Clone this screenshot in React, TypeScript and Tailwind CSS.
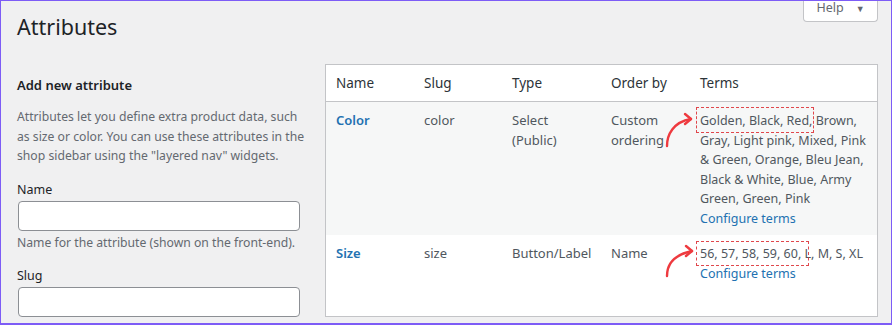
import React from "react"

const terms1 = [
  "Golden, Black, Red, Brown,",
  "Gray, Light pink, Mixed, Pink",
  "& Green, Orange, Bleu Jean,",
  "Black & White, Blue, Army",
  "Green, Green, Pink",
]

const Arrow = ({ d, head }: { d: string; head: string }) => (
  <g fill="none" stroke="#ee3a3f" strokeWidth="2.4" strokeLinecap="round" strokeLinejoin="round">
    <path d={d} />
    <path d={head} />
  </g>
)

export default function App() {
  return (
    <div className="relative h-[325px] w-[892px] overflow-hidden border border-b-2 border-[#7d5cf6] bg-[#f0f0f1] font-['Noto_Sans',sans-serif] text-[13px] text-[#3c434a]">
      <div className="absolute right-[13px] top-0 flex h-[21px] w-[75px] items-start justify-center gap-3 rounded-b-[4px] border border-t-0 border-[#c3c4c7] bg-white text-[12.5px] text-[#646970]">
        <span className="-mt-[2px] leading-[18px]">Help</span>
        <span className="-mt-[1px] text-[9px] leading-[18px]">▼</span>
      </div>

      <h1 className="pl-[16px] pt-[11px] text-[21.5px] leading-[30px] text-[#1d2327]">Attributes</h1>

      <div className="mt-[22px] flex">
        <div className="ml-[16px] w-[284px] pt-[11px]">
          <h2 className="text-[13px] font-semibold leading-[20px] text-[#1d2327]">Add new attribute</h2>
          <p className="mt-[12px] whitespace-nowrap text-[12.2px] leading-[19.5px] text-[#646970]">
            Attributes let you define extra product data, such
            <br />
            as size or color. You can use these attributes in the
            <br />
            shop sidebar using the "layered nav" widgets.
          </p>
          <label className="mt-[14px] block text-[12.5px] leading-[20px] text-[#1d2327]">Name</label>
          <div className="mt-[1px] ml-[1px] h-[30px] w-[282px] rounded-[4px] border border-[#8c8f94] bg-white" />
          <p className="mt-[2px] whitespace-nowrap text-[12.2px] leading-[19.5px] text-[#646970]">
            Name for the attribute (shown on the front-end).
          </p>
          <label className="mt-[14px] block text-[12.5px] leading-[20px] text-[#1d2327]">Slug</label>
          <div className="mt-[1px] ml-[1px] h-[30px] w-[282px] rounded-[4px] border border-[#8c8f94] bg-white" />
        </div>

        <div className="relative ml-[24px] w-[553px] border border-[#c3c4c7] bg-white">
          <div className="grid h-[37px] grid-cols-[88px_88px_99px_89px_1fr] items-center border-b border-[#c3c4c7] text-[13.5px] text-[#2c3338]">
            <div className="pl-[10px]">Name</div>
            <div className="pl-[10px]">Slug</div>
            <div className="pl-[10px]">Type</div>
            <div className="pl-[10px]">Order by</div>
            <div className="pl-[10px]">Terms</div>
          </div>

          <div className="grid h-[133px] grid-cols-[88px_88px_99px_89px_1fr] bg-[#f6f7f7] pt-[9px] leading-[19.5px] text-[#50575e]">
            <div className="pl-[10px] font-semibold text-[#2271b1]">Color</div>
            <div className="pl-[10px]">color</div>
            <div className="pl-[10px]">
              Select
              <br />
              (Public)
            </div>
            <div className="pl-[10px]">
              Custom
              <br />
              ordering
            </div>
            <div className="whitespace-nowrap pl-[10px] text-[12.5px]">
              {terms1.map((t) => (
                <div key={t}>{t}</div>
              ))}
              <div className="text-[#2271b1]">Configure terms</div>
            </div>
          </div>

          <div className="grid h-[75px] grid-cols-[88px_88px_99px_89px_1fr] pt-[9px] leading-[19.5px] text-[#50575e]">
            <div className="pl-[10px] font-semibold text-[#2271b1]">Size</div>
            <div className="pl-[10px]">size</div>
            <div className="pl-[10px]">Button/Label</div>
            <div className="pl-[10px]">Name</div>
            <div className="whitespace-nowrap pl-[10px] text-[12.5px]">
              <div>56, 57, 58, 59, 60, L, M, S, XL</div>
              <div className="text-[#2271b1]">Configure terms</div>
            </div>
          </div>

          <div className="absolute left-[370px] top-[42px] h-[26px] w-[118px] border border-dashed border-[#e0474c]" />
          <div className="absolute left-[370px] top-[176px] h-[25px] w-[113px] border border-dashed border-[#e0474c]" />

          <svg className="pointer-events-none absolute left-0 top-0" width="553" height="247" viewBox="0 0 553 247">
            <Arrow d="M341 81 C341 70 347 57 365 54" head="M359 49 L365 54 L359 59" />
            <Arrow d="M341 211 C341 200 347 190 366 186" head="M360 181 L366 186 L360 191" />
          </svg>
        </div>
      </div>
    </div>
  )
}
